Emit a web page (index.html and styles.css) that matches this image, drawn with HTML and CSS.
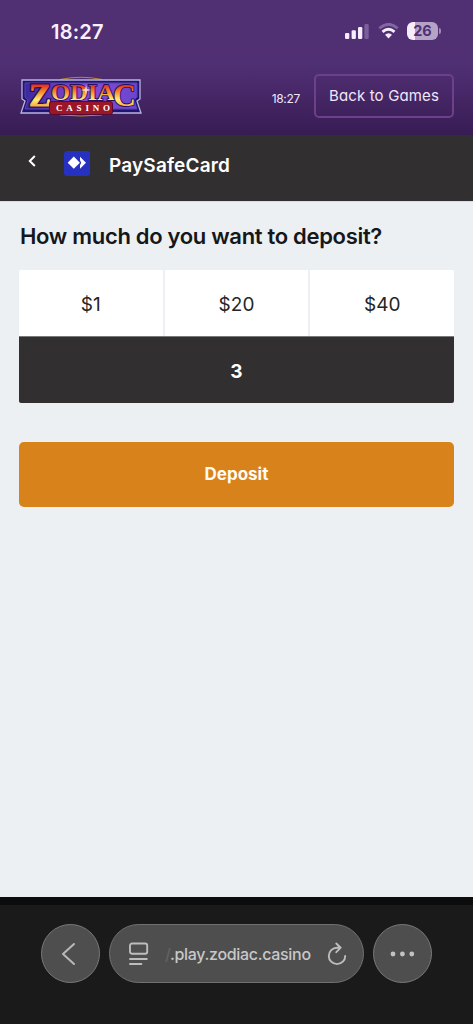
FILE: index.html
```html
<!DOCTYPE html>
<html lang="en">
<head>
<meta charset="utf-8">
<meta name="viewport" content="width=device-width, initial-scale=1">
<title>Deposit</title>
<link rel="stylesheet" href="styles.css">
</head>
<body>
<div class="phone">
  <div class="status">
    <span class="status-time">18:27</span>
    <div class="status-icons">
      <svg class="signal" width="24" height="16" viewBox="0 0 24 16">
        <rect x="0" y="10" width="4.3" height="6" rx="1.2" fill="#f6edfc"/>
        <rect x="6.6" y="7.2" width="4.3" height="8.8" rx="1.2" fill="#f6edfc"/>
        <rect x="13" y="4" width="4.3" height="12" rx="1.2" fill="#f6edfc"/>
        <rect x="19.4" y="1" width="4.3" height="15" rx="1.2" fill="#7c5e9b"/>
      </svg>
      <svg class="wifi" width="21" height="16" viewBox="0 0 21 16">
        <path d="M1.3 5.3Q10.5-2.7 19.7 5.3" fill="none" stroke="#8367a3" stroke-width="2.8"/>
        <path d="M4.5 8.9Q10.5 3.7 16.5 8.9" fill="none" stroke="#f6edfc" stroke-width="2.8"/>
        <path d="M7 11.8Q10.5 8.8 14 11.8L10.5 15.5Z" fill="#f6edfc"/>
      </svg>
      <div class="battery">26</div>
      <span class="battery-tip"></span>
    </div>
  </div>

  <header class="header">
    <svg class="logo" width="122" height="42" viewBox="0 0 122 42">
      <defs>
        <linearGradient id="fire" gradientUnits="userSpaceOnUse" x1="0" y1="9" x2="0" y2="30">
          <stop offset="0" stop-color="#e0301f"/>
          <stop offset=".35" stop-color="#f8922c"/>
          <stop offset=".7" stop-color="#ffee77"/>
          <stop offset="1" stop-color="#fbb040"/>
        </linearGradient>
        <linearGradient id="plate" x1="0" y1="0" x2="1" y2="0">
          <stop offset="0" stop-color="#3c28a0"/>
          <stop offset=".5" stop-color="#8b4ad8"/>
          <stop offset="1" stop-color="#6b45cf"/>
        </linearGradient>
      </defs>
      <path d="M40 3.5Q61-1 82 3.5M40 39Q61 41 82 39" fill="none" stroke="#b78a31" stroke-width="1"/>
      <path d="M2 4H120V23L117 25L121 37H1L5 25L2 23Z" fill="#221572" stroke="#b9b4df" stroke-width="1.3"/>
      <path d="M5 7H117V21L114 24L117 33H5L8 24L5 21Z" fill="url(#plate)" stroke="#5943ae"/>
      <g class="logo-word">
        <g fill="#26105d" stroke="#26105d" stroke-width="3.4">
          <text x="9" y="30" font-size="31" textLength="22" lengthAdjust="spacingAndGlyphs">Z</text>
        </g>
        <g fill="url(#fire)" stroke="url(#fire)" stroke-width=".8">
          <text x="9" y="30" font-size="31" textLength="22" lengthAdjust="spacingAndGlyphs">Z</text>
        </g>
        <g fill="url(#fire)" stroke="#26105d" stroke-width="1.8" paint-order="stroke">
          <text x="31" y="24" font-size="23" textLength="64" lengthAdjust="spacingAndGlyphs">ODIA</text>
          <text x="93" y="30" font-size="31" textLength="23" lengthAdjust="spacingAndGlyphs">C</text>
        </g>
      </g>
      <path d="M66 9L67 13L71 14L67 15L66 19L65 15L61 14L65 13Z" fill="#fff0dc" opacity=".85"/>
      <rect x="29.5" y="25.5" width="63" height="13" rx="2.5" fill="#9b1627" stroke="#550b35"/>
      <text class="logo-sub" x="36" y="35.3" font-size="9" textLength="54">CASINO</text>
    </svg>
    <span class="header-time">18:27</span>
    <a class="games">Back to Games</a>
  </header>

  <nav class="method">
    <svg class="back" width="10" height="14" viewBox="0 0 10 14"><path d="M7.8 2L2.8 7L7.8 12" fill="none" stroke="#fff" stroke-width="2"/></svg>
    <svg class="method-icon" width="26" height="25" viewBox="0 0 26 25">
      <rect width="26" height="25" rx="3" fill="#2731c1"/>
      <path d="M9.8 5.6L15.9 11.7L9.8 17.8L3.7 11.7Z" fill="#fff"/>
      <path d="M16 5.7L22 11.7L16 17.7V14.2L17.2 11.7L16 9.2Z" fill="#fff"/>
    </svg>
    <span class="method-name">PaySafeCard</span>
  </nav>

  <main class="main">
    <h1 class="question">How much do you want to deposit?</h1>
    <div class="amounts">
      <div class="amount">$1</div>
      <div class="amount">$20</div>
      <div class="amount">$40</div>
    </div>
    <div class="custom">3</div>
    <div class="deposit">Deposit</div>
  </main>

  <footer class="browser">
    <div class="round">
      <svg class="prev" width="16" height="24" viewBox="0 0 16 24"><path d="M13 2L2 12L13 22" fill="none" stroke="#b9b9b9" stroke-width="2" stroke-linecap="round" stroke-linejoin="round"/></svg>
    </div>
    <div class="address">
      <svg class="reader" width="20" height="24" viewBox="0 0 20 24" fill="none" stroke="#bdbdbd" stroke-width="1.9" stroke-linecap="round">
        <rect x="1" y="1.5" width="17.2" height="10.2" rx="2"/>
        <path d="M1 17H17.8M1 22H12.4"/>
      </svg>
      <span class="url"><span class="url-cut">/</span>.play.zodiac.casino</span>
      <svg class="reload" width="20" height="24" viewBox="0 0 20 24" fill="none" stroke="#bdbdbd" stroke-width="1.9" stroke-linecap="round" stroke-linejoin="round">
        <path d="M13 5.7H10A8.2 8.2 0 1 0 18.2 13.9M9.3 1.5L13.7 5.7L9.3 10.2"/>
      </svg>
    </div>
    <div class="round">
      <svg width="26" height="6" viewBox="0 0 26 6" fill="#c2c2c2"><circle cx="3" cy="3" r="2.4"/><circle cx="12.4" cy="3" r="2.4"/><circle cx="21.8" cy="3" r="2.4"/></svg>
    </div>
  </footer>
</div>
</body>
</html>
```
FILE: styles.css
```css
* { box-sizing: border-box; }
body { margin: 0; font-family: Inter, "Liberation Sans", sans-serif; }
svg { display: block; flex: none; }
.phone { width: 473px; height: 1024px; display: flex; flex-direction: column; background: #ecf0f3; overflow: hidden; }

.status { height: 60px; display: flex; justify-content: space-between; align-items: flex-start; background: #503073; padding: 19px 33px 0 51px; }
.status-time { color: #faf0ff; font-size: 20px; line-height: 26px; font-weight: 600; letter-spacing: .2px; }
.status-icons { display: flex; align-items: center; padding-top: 3px; }
.signal { margin: 0 9px 0 0; }
.wifi { margin-right: 8px; }
.battery { width: 31px; height: 18px; border-radius: 6px; background: linear-gradient(90deg, #f6edfc 0 8px, #b5a3c7 8px); color: #503073; font-size: 14.5px; line-height: 18px; font-weight: 700; text-align: center; }
.battery-tip { width: 2px; height: 6px; margin: 0 -1px 0 1px; border-radius: 0 2px 2px 0; background: #9f8ab5; }

.header { height: 75px; display: flex; align-items: flex-start; padding: 14px 19px 0 20px; background: linear-gradient(#503175, #472767 45%, #371c53); color: #f1e7fa; font-feature-settings: "cv11"; }
.logo { margin-top: 2px; }
.logo-word { font-family: "Liberation Serif", serif; font-weight: 700; }
.logo-sub { font-family: "Liberation Serif", serif; font-weight: 700; fill: #fff; }
.header-time { margin-left: auto; margin-right: 14px; padding-top: 16px; font-size: 12px; line-height: 18px; letter-spacing: -.3px; }
.games { width: 140px; height: 44px; border: 2px solid #6b4189; border-radius: 5px; font-size: 15px; line-height: 40px; letter-spacing: .15px; text-align: center; white-space: nowrap; }

.method { height: 66px; display: flex; align-items: flex-start; padding: 17px 0 0 27px; background: #322f30; color: #fff; }
.back { margin-top: 2px; }
.method-icon { margin: -1px 19px 0 27px; }
.method-name { margin-top: 1px; font-size: 19px; line-height: 26px; font-weight: 600; letter-spacing: .17px; }

.main { flex: 1; padding: 20px 19px 0; border-top: 1px solid #d9dddf; }
.question { margin: 0 0 20px 1px; font-size: 22px; line-height: 28px; font-weight: 600; letter-spacing: -.31px; color: #15171a; white-space: nowrap; }
.amounts { display: grid; grid-template-columns: repeat(3, 1fr); gap: 2px; height: 66px; border-radius: 2px 2px 0 0; overflow: hidden; }
.amount { background: #fff; color: #252525; font-size: 19px; line-height: 69px; text-align: center; }
.custom { height: 67px; border-top: 1px solid #77797a; border-radius: 0 0 2px 2px; background: #322f30; color: #fff; font-size: 19px; line-height: 69px; font-weight: 700; text-align: center; }
.deposit { height: 65px; margin-top: 39px; border-radius: 5px; background: #d8821c; color: #fffaf2; font-size: 17px; line-height: 65px; font-weight: 700; text-align: center; }

.browser { height: 127px; display: flex; align-items: flex-start; gap: 9px; padding: 19px 41px 0; border-top: 8px solid #0d0d0d; background: #1a1a1a; }
.round { width: 59px; height: 59px; flex: none; display: flex; align-items: center; justify-content: center; border: 1px solid #797979; border-radius: 50%; background: #4e4e4e; }
.prev { margin-right: 3px; }
.address { width: 255px; height: 59px; flex: none; display: flex; align-items: center; padding: 0 16px 0 19px; border: 1px solid #707070; border-radius: 30px; background: #4e4e4e; }
.url { margin-left: 16px; font-size: 16px; line-height: 24px; font-weight: 500; letter-spacing: -.32px; color: #c8c8c8; white-space: nowrap; }
.url-cut { color: #626262; }
.reload { margin-left: auto; }
```
